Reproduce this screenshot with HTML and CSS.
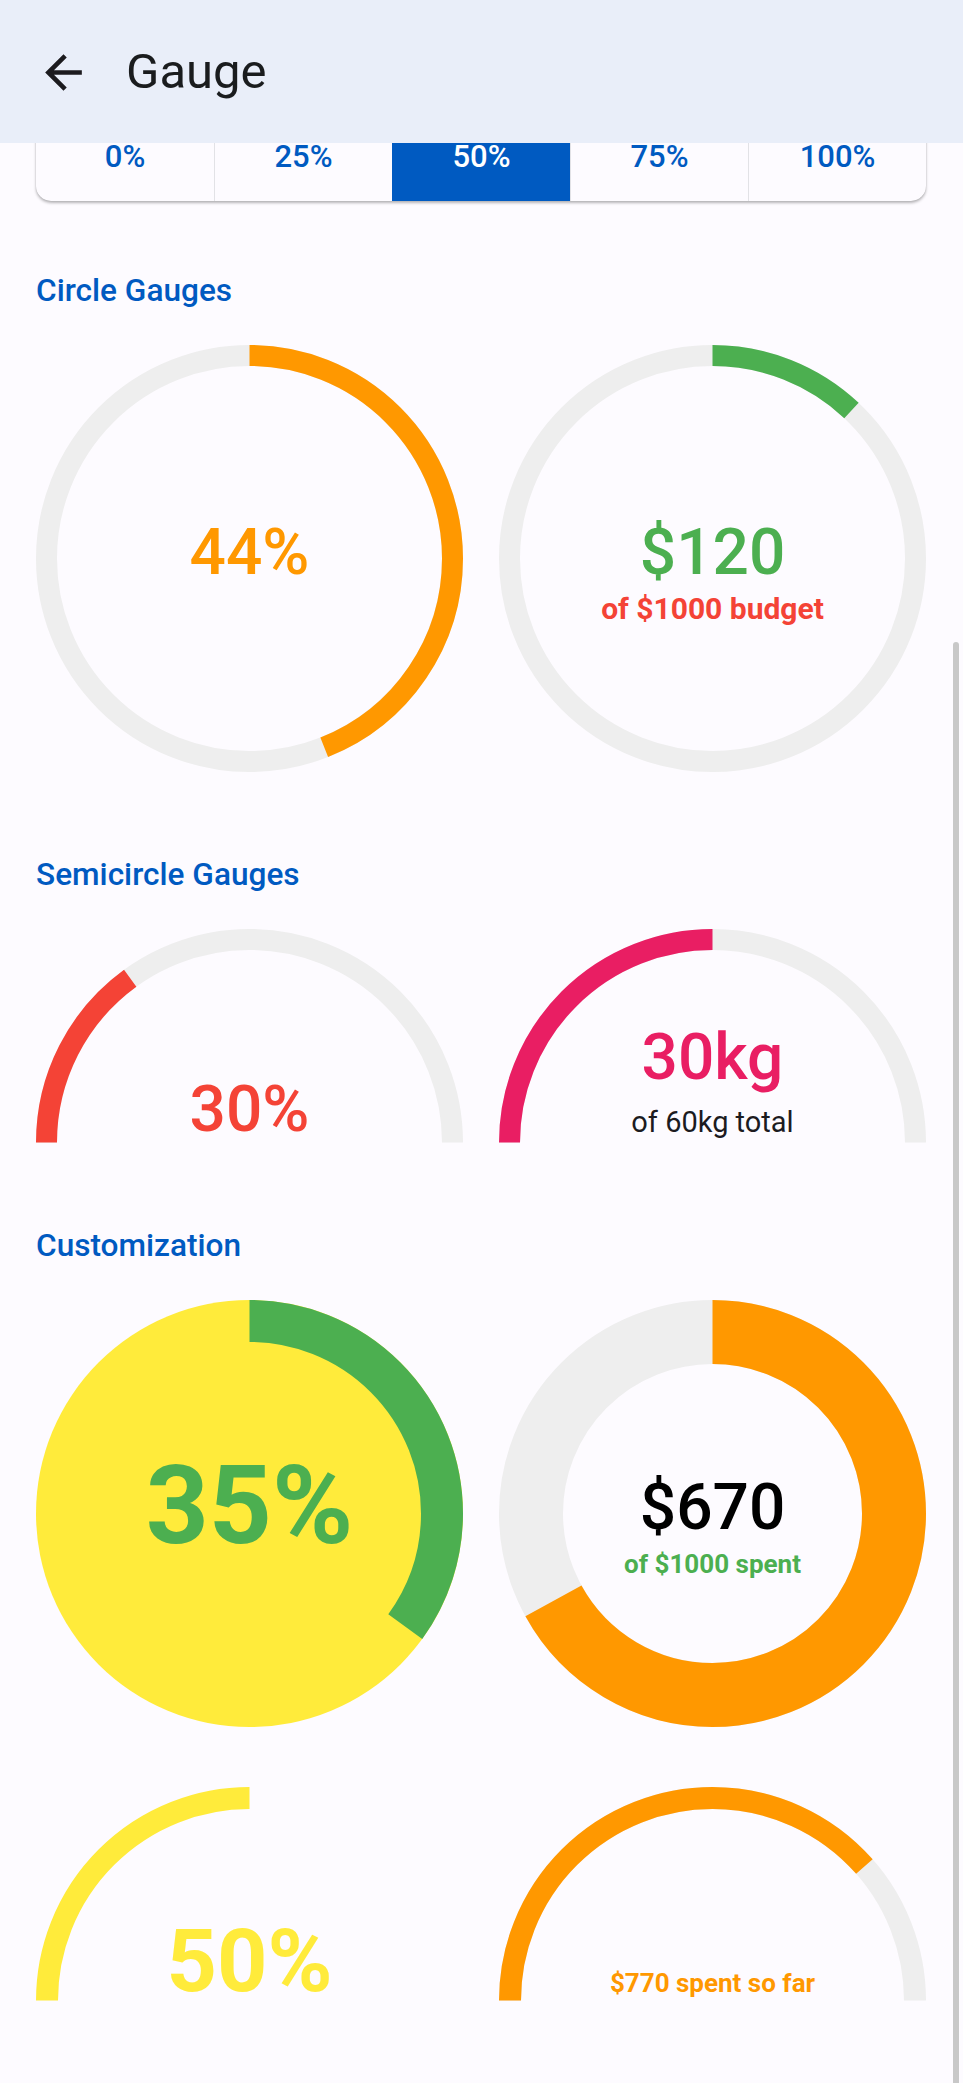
FILE: index.html
```html
<!DOCTYPE html>
<html lang="en">
<head>
<meta charset="utf-8">
<title>Gauge</title>
<link rel="stylesheet" href="styles.css">
</head>
<body>
<header class="appbar">
  <svg class="back" viewBox="0 0 24 24" aria-hidden="true"><path d="M20 11H7.83l5.59-5.59L12 4l-8 8 8 8 1.41-1.41L7.83 13H20v-2z"/></svg>
  <h1 class="title">Gauge</h1>
</header>

<main class="content">
  <div class="segmented">
    <button class="seg">0%</button>
    <button class="seg">25%</button>
    <button class="seg seg-active">50%</button>
    <button class="seg">75%</button>
    <button class="seg">100%</button>
  </div>

  <section class="section">
    <h2 class="section-title">Circle Gauges</h2>
    <div class="gauge-grid">
      <div class="gauge">
        <svg class="dial" viewBox="0 0 427 427">
          <circle class="track thin" cx="213.5" cy="213.5" r="203"/>
          <circle class="arc thin c-orange" cx="213.5" cy="213.5" r="203" pathLength="100" stroke-dasharray="44 100" transform="rotate(-90 213.5 213.5)"/>
        </svg>
        <div class="label label-circle">
          <span class="value t-orange">44%</span>
        </div>
      </div>
      <div class="gauge">
        <svg class="dial" viewBox="0 0 427 427">
          <circle class="track thin" cx="213.5" cy="213.5" r="203"/>
          <circle class="arc thin c-green" cx="213.5" cy="213.5" r="203" pathLength="100" stroke-dasharray="12 100" transform="rotate(-90 213.5 213.5)"/>
        </svg>
        <div class="label label-circle">
          <span class="value t-green">$120</span>
          <span class="sub sub-budget t-red">of $1000 budget</span>
        </div>
      </div>
    </div>
  </section>

  <section class="section">
    <h2 class="section-title">Semicircle Gauges</h2>
    <div class="gauge-grid">
      <div class="gauge semi">
        <svg class="dial" viewBox="0 0 427 214">
          <path class="track thin" d="M10.5 213.5 A203 203 0 0 1 416.5 213.5"/>
          <path class="arc thin c-red" d="M10.5 213.5 A203 203 0 0 1 416.5 213.5" pathLength="100" stroke-dasharray="30 100"/>
        </svg>
        <div class="label label-semi">
          <span class="value t-red">30%</span>
        </div>
      </div>
      <div class="gauge semi">
        <svg class="dial" viewBox="0 0 427 214">
          <path class="track thin" d="M10.5 213.5 A203 203 0 0 1 416.5 213.5"/>
          <path class="arc thin c-pink" d="M10.5 213.5 A203 203 0 0 1 416.5 213.5" pathLength="100" stroke-dasharray="50 100"/>
        </svg>
        <div class="label label-semi-two">
          <span class="value t-pink">30kg</span>
          <span class="sub sub-total">of 60kg total</span>
        </div>
      </div>
    </div>
  </section>

  <section class="section">
    <h2 class="section-title">Customization</h2>
    <div class="gauge-grid custom-grid">
      <div class="gauge">
        <svg class="dial" viewBox="0 0 427 427">
          <circle class="disc" cx="213.5" cy="213.5" r="213.5"/>
          <circle class="arc wide c-green" cx="213.5" cy="213.5" r="192.5" pathLength="100" stroke-dasharray="35 100" transform="rotate(-90 213.5 213.5)"/>
        </svg>
        <div class="label label-big">
          <span class="value value-big t-green">35%</span>
        </div>
      </div>
      <div class="gauge">
        <svg class="dial" viewBox="0 0 427 427">
          <circle class="track thick" cx="213.5" cy="213.5" r="181.5"/>
          <circle class="arc thick c-orange" cx="213.5" cy="213.5" r="181.5" pathLength="100" stroke-dasharray="67 100" transform="rotate(-90 213.5 213.5)"/>
        </svg>
        <div class="label label-circle">
          <span class="value t-black">$670</span>
          <span class="sub sub-spent t-green">of $1000 spent</span>
        </div>
      </div>
      <div class="gauge semi">
        <svg class="dial" viewBox="0 0 427 214">
          <path class="arc mid c-yellow" d="M11 213.5 A202.5 202.5 0 0 1 416 213.5" pathLength="100" stroke-dasharray="50 100"/>
        </svg>
        <div class="label label-half">
          <span class="value value-half t-yellow">50%</span>
        </div>
      </div>
      <div class="gauge semi">
        <svg class="dial" viewBox="0 0 427 214">
          <path class="track mid" d="M11 213.5 A202.5 202.5 0 0 1 416 213.5"/>
          <path class="arc mid c-orange" d="M11 213.5 A202.5 202.5 0 0 1 416 213.5" pathLength="100" stroke-dasharray="77 100"/>
        </svg>
        <div class="label label-far">
          <span class="sub sub-far t-orange">$770 spent so far</span>
        </div>
      </div>
    </div>
  </section>
</main>

<div class="scrollbar"></div>
</body>
</html>
```

FILE: styles.css
```css
* { box-sizing: border-box; }

html, body {
  margin: 0;
  padding: 0;
  background: #fdfbff;
  font-family: Roboto, "Noto Sans", "Liberation Sans", sans-serif;
  color: #1c1b1f;
}

.appbar {
  position: fixed;
  top: 0;
  left: 0;
  right: 0;
  height: 143px;
  background: #e9eef9;
  display: flex;
  align-items: center;
  z-index: 10;
}

.back {
  width: 55px;
  height: 55px;
  margin-left: 36px;
  margin-top: 2px;
  fill: #1c1b1f;
  flex: none;
}

.title {
  margin: 0 0 0 35px;
  font-size: 49px;
  font-weight: 400;
  line-height: 1;
  color: #1a1c1e;
  letter-spacing: 0;
}

.content {
  padding: 111px 37px 83px 36px;
}

.segmented {
  height: 90px;
  display: grid;
  grid-template-columns: repeat(5, 1fr);
  border-radius: 15px;
  overflow: hidden;
  background: #fdfbff;
  box-shadow: 0 2px 3px rgba(0, 0, 0, 0.28), 0 0 1px rgba(0, 0, 0, 0.2);
}

.seg {
  border: 0;
  border-left: 1px solid #e2e2e6;
  background: transparent;
  font-family: inherit;
  font-size: 31px;
  font-weight: 500;
  line-height: 1;
  color: #005ac1;
  padding: 0;
  display: flex;
  align-items: center;
  justify-content: center;
}

.seg:first-child { border-left: 0; }

.seg-active {
  background: #005ac1;
  color: #ffffff;
  border-left-color: #005ac1;
}

.section-title {
  margin: 74px 0 39px;
  font-size: 31.6px;
  font-weight: 500;
  line-height: 31px;
  color: #005ac1;
}

.section + .section .section-title {
  margin-top: 87px;
}

.gauge-grid {
  display: grid;
  grid-template-columns: 1fr 1fr;
  column-gap: 36px;
}

.custom-grid {
  row-gap: 60px;
}

.gauge {
  position: relative;
  height: 427px;
}

.gauge.semi {
  height: 214px;
}

.dial {
  display: block;
  width: 100%;
  height: 100%;
}

.track, .arc {
  fill: none;
  stroke-linecap: butt;
}

.track { stroke: #eeeeee; }

.thin { stroke-width: 21px; }
.mid { stroke-width: 22px; }
.wide { stroke-width: 42px; }
.thick { stroke-width: 64px; }

.disc { fill: #ffeb3b; }

.c-orange { stroke: #ff9800; }
.c-green { stroke: #4caf50; }
.c-red { stroke: #f44336; }
.c-pink { stroke: #e91e63; }
.c-yellow { stroke: #ffeb3b; }

.label {
  position: absolute;
  inset: 0;
  display: flex;
  flex-direction: column;
  align-items: center;
  text-align: center;
}

.label-circle { padding-top: 176px; }
.label-semi { padding-top: 149px; }
.label-semi-two { padding-top: 97px; }
.label-big { padding-top: 151px; }
.label-half { padding-top: 130px; }
.label-far { padding-top: 183px; }

.value {
  font-size: 64px;
  font-weight: 500;
  line-height: 1;
  white-space: nowrap;
}

.value-big {
  font-size: 110px;
  font-weight: 700;
}

.value-half {
  font-size: 88px;
  font-weight: 700;
}

.sub {
  white-space: nowrap;
  line-height: 1;
}

.sub-budget {
  font-size: 30px;
  font-weight: 700;
  margin-top: 9px;
}

.sub-total {
  font-size: 29px;
  font-weight: 400;
  margin-top: 18px;
  color: #1c1b1f;
}

.sub-spent {
  font-size: 26px;
  font-weight: 700;
  margin-top: 11px;
}

.sub-far {
  font-size: 26px;
  font-weight: 700;
}

.t-orange { color: #ff9800; }
.t-green { color: #4caf50; }
.t-red { color: #f44336; }
.t-pink { color: #e91e63; }
.t-yellow { color: #ffeb3b; }
.t-black { color: #000000; }

.scrollbar {
  position: fixed;
  top: 642px;
  bottom: 0;
  right: 4px;
  width: 6px;
  border-radius: 3px 3px 0 0;
  background: #c8c8c8;
  z-index: 11;
}
```
